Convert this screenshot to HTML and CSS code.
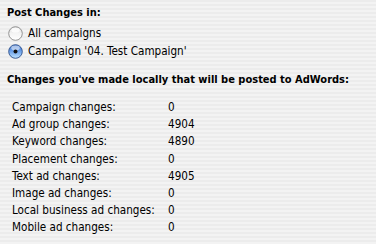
FILE: index.html
```html
<!DOCTYPE html>
<html>
<head>
<meta charset="utf-8">
<link rel="stylesheet" href="styles.css">
</head>
<body>
<div class="panel">
  <div class="heading">Post Changes in:</div>
  <div class="radio-group">
    <div class="radio-row">
      <svg class="radio" width="15" height="15" viewBox="0 0 15 15">
        <defs>
          <linearGradient id="gOff" x1="0" y1="0" x2="0" y2="1">
            <stop offset="0" stop-color="#d8d8d8"/>
            <stop offset="0.5" stop-color="#f4f4f4"/>
            <stop offset="1" stop-color="#ffffff"/>
          </linearGradient>
        </defs>
        <circle cx="7.5" cy="7.5" r="6.8" fill="url(#gOff)" stroke="#8a8a8a" stroke-width="0.9"/>
        <ellipse cx="7.5" cy="4.2" rx="4.2" ry="2.4" fill="#ffffff" opacity="0.8"/>
      </svg>
      <span>All campaigns</span>
    </div>
    <div class="radio-row">
      <svg class="radio" width="15" height="15" viewBox="0 0 15 15">
        <defs>
          <linearGradient id="gOn" x1="0" y1="0" x2="0" y2="1">
            <stop offset="0" stop-color="#3a6fc8"/>
            <stop offset="0.5" stop-color="#6fa3ea"/>
            <stop offset="1" stop-color="#bfe4ff"/>
          </linearGradient>
        </defs>
        <circle cx="7.5" cy="7.5" r="6.8" fill="url(#gOn)" stroke="#2c4f8a" stroke-width="0.9"/>
        <ellipse cx="7.5" cy="4" rx="4.3" ry="2.4" fill="#ffffff" opacity="0.55"/>
        <circle cx="7.5" cy="7.5" r="2" fill="#111111"/>
      </svg>
      <span>Campaign '04. Test Campaign'</span>
    </div>
  </div>
  <div class="heading section">Changes you've made locally that will be posted to AdWords:</div>
  <div class="stats">
    <span>Campaign changes:</span><span>0</span>
    <span>Ad group changes:</span><span>4904</span>
    <span>Keyword changes:</span><span>4890</span>
    <span>Placement changes:</span><span>0</span>
    <span>Text ad changes:</span><span>4905</span>
    <span>Image ad changes:</span><span>0</span>
    <span>Local business ad changes:</span><span>0</span>
    <span>Mobile ad changes:</span><span>0</span>
  </div>
</div>
</body>
</html>
```
FILE: styles.css
```css
html, body {
  margin: 0;
  padding: 0;
}
body {
  width: 376px;
  height: 244px;
  overflow: hidden;
  background: repeating-linear-gradient(to bottom, #ececec 0px, #ececec 2px, #f3f3f3 2px, #f3f3f3 4px);
  font-family: "DejaVu Sans Condensed", "DejaVu Sans", sans-serif;
  font-size: 11.6px;
  color: #000;
}
.panel {
  padding: 3.5px 0 0 7px;
  display: flex;
  flex-direction: column;
}
.heading {
  font-weight: bold;
  font-size: 11px;
  line-height: 17px;
}
.heading.section {
  margin-top: 11px;
}
.radio-group {
  margin-top: 3.5px;
  display: flex;
  flex-direction: column;
}
.radio-row {
  display: flex;
  align-items: center;
  gap: 5px;
  height: 18px;
  padding-left: 1px;
}
.radio {
  flex: none;
}
.stats {
  margin-top: 11px;
  padding-left: 5px;
  display: grid;
  grid-template-columns: 156px auto;
  line-height: 17.2px;
}
```
